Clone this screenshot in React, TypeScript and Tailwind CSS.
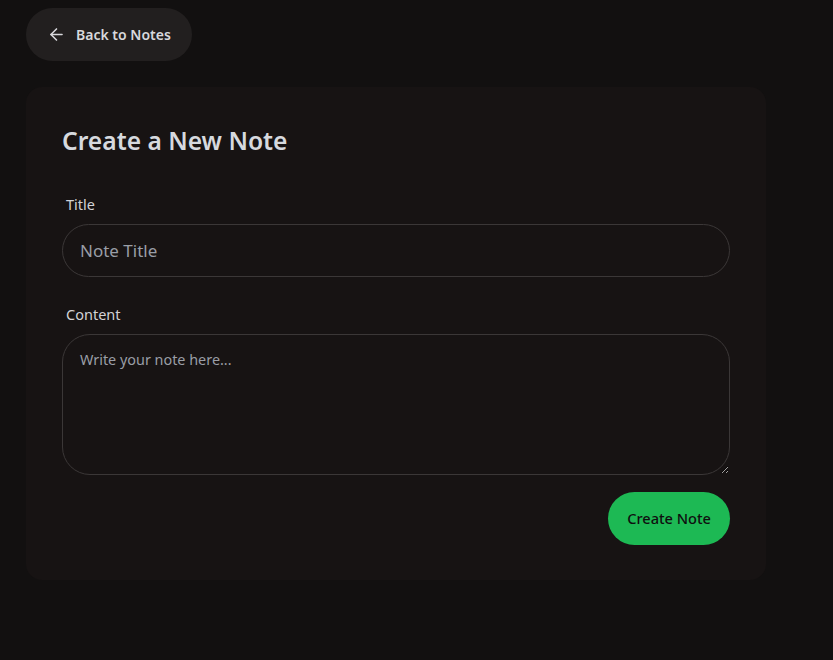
import React, { useState } from 'react';
import { ArrowLeft } from 'lucide-react';

export default function App() {
    const [title, setTitle] = useState('');
    const [content, setContent] = useState('');

    return (
        <div
            className="min-h-screen bg-[#121010] px-[26px] pt-2 pb-10"
            style={{ fontFamily: '"Noto Sans", "Open Sans", sans-serif' }}
        >
            {/* Back link */}
            <button className="flex items-center gap-[10px] h-[53px] pl-[21px] pr-[21px] rounded-full bg-[#221f1f] text-[#d8d8dc] text-[14px] font-semibold">
                <ArrowLeft size={19} strokeWidth={2} />
                Back to Notes
            </button>

            {/* Form card */}
            <div className="mt-[26px] w-[740px] rounded-2xl bg-[#171313] px-9 pt-[38px] pb-[35px]">
                <h1 className="text-[24.6px] font-semibold text-[#d6d9de] leading-8">Create a New Note</h1>

                <div className="mt-[37px] flex flex-col">
                    <label className="pl-1 text-[14.5px] text-[#d2d2d6] leading-5">Title</label>
                    <input
                        value={title}
                        onChange={(e) => setTitle(e.target.value)}
                        placeholder="Note Title"
                        className="mt-[10px] h-[53px] w-full rounded-full border border-[#3b3737] bg-transparent px-[17px] text-[17px] text-[#d8d8dc] placeholder:text-[#9a9ea6] focus:outline-none"
                    />
                </div>

                <div className="mt-[27px] flex flex-col">
                    <label className="pl-1 text-[14.5px] text-[#d2d2d6] leading-5">Content</label>
                    <textarea
                        value={content}
                        onChange={(e) => setContent(e.target.value)}
                        placeholder="Write your note here..."
                        className="mt-[10px] h-[141px] w-full rounded-[28px] border border-[#3b3737] bg-transparent px-[17px] py-[14px] text-[14.4px] text-[#d8d8dc] placeholder:text-[#9a9ea6] focus:outline-none"
                    />
                </div>

                <div className="mt-[17px] flex justify-end">
                    <button className="h-[53px] px-[19px] rounded-full bg-[#1db954] text-[14.6px] font-medium text-[#0f0f0f]">
                        Create Note
                    </button>
                </div>
            </div>
        </div>
    );
}
